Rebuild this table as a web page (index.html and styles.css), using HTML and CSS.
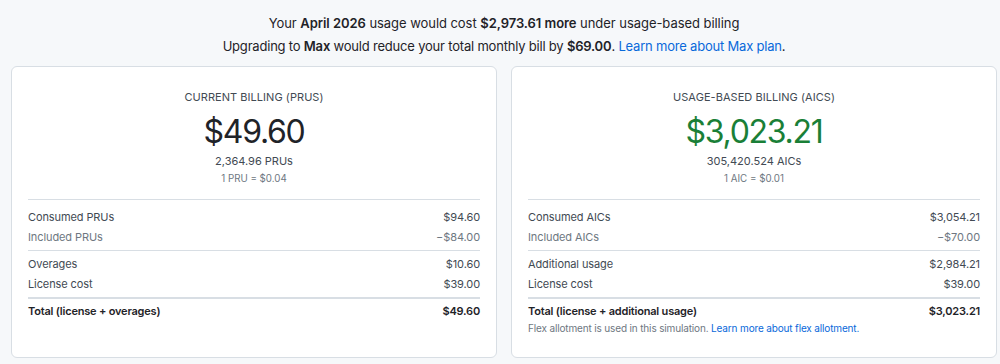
FILE: index.html
```html
<!DOCTYPE html>
<html lang="en">
<head>
<meta charset="utf-8">
<title>Billing comparison</title>
<link rel="stylesheet" href="styles.css">
</head>
<body>
<div class="page">
  <header class="summary">
    <p class="summary-line">Your <strong>April 2026</strong> usage would cost <strong>$2,973.61 more</strong> under usage-based billing</p>
    <p class="summary-line summary-line-tight">Upgrading to <strong>Max</strong> would reduce your total monthly bill by <strong>$69.00</strong>. <a class="link" href="#">Learn more about Max plan</a>.</p>
  </header>
  <div class="cards">
    <section class="card">
      <div class="card-head">
        <h2 class="card-title">Current billing (PRUs)</h2>
        <div class="amount">$49.60</div>
        <div class="units">2,364.96 PRUs</div>
        <div class="rate">1 PRU = $0.04</div>
      </div>
      <div class="breakdown">
        <div class="group group-first">
          <div class="row"><span>Consumed PRUs</span><span>$94.60</span></div>
          <div class="row row-muted"><span>Included PRUs</span><span>−$84.00</span></div>
        </div>
        <div class="group">
          <div class="row"><span>Overages</span><span>$10.60</span></div>
          <div class="row"><span>License cost</span><span>$39.00</span></div>
        </div>
        <div class="total">
          <div class="row row-total"><span>Total (license + overages)</span><span>$49.60</span></div>
        </div>
      </div>
    </section>
    <section class="card">
      <div class="card-head">
        <h2 class="card-title">Usage-based billing (AICs)</h2>
        <div class="amount amount-green">$3,023.21</div>
        <div class="units">305,420.524 AICs</div>
        <div class="rate">1 AIC = $0.01</div>
      </div>
      <div class="breakdown">
        <div class="group group-first">
          <div class="row"><span>Consumed AICs</span><span>$3,054.21</span></div>
          <div class="row row-muted"><span>Included AICs</span><span>−$70.00</span></div>
        </div>
        <div class="group">
          <div class="row"><span>Additional usage</span><span>$2,984.21</span></div>
          <div class="row"><span>License cost</span><span>$39.00</span></div>
        </div>
        <div class="total">
          <div class="row row-total"><span>Total (license + additional usage)</span><span>$3,023.21</span></div>
          <p class="note">Flex allotment is used in this simulation. <a class="link" href="#">Learn more about flex allotment.</a></p>
        </div>
      </div>
    </section>
  </div>
</div>
</body>
</html>
```
FILE: styles.css
```css
* { box-sizing: border-box; }
html, body { margin: 0; padding: 0; }
body {
  background: #f6f8fa;
  font-family: Inter, "Noto Sans", sans-serif;
  color: #1f2328;
}
.page {
  padding: 12px 3px 6px 11px;
}
.summary {
  text-align: center;
  margin-bottom: 8px;
}
.summary-line {
  margin: 0;
  font-size: 13px;
  line-height: 23px;
  letter-spacing: -0.05px;
  color: #1f2328;
}
.summary-line-tight { letter-spacing: -0.2px; }
.summary-line strong { font-weight: 600; }
.link { color: #0969da; text-decoration: none; }
.cards {
  display: grid;
  grid-template-columns: 1fr 1fr;
  gap: 14px;
}
.card {
  background: #ffffff;
  border: 1px solid #d8dee4;
  border-radius: 6px;
  padding: 22px 16px 0 16px;
  height: 292px;
}
.card-head {
  text-align: center;
  padding-bottom: 13px;
}
.card-title {
  margin: 0;
  font-size: 11px;
  line-height: 16px;
  font-weight: 400;
  text-transform: uppercase;
  letter-spacing: 0.05px;
  color: #424a53;
}
.amount {
  margin-top: 7px;
  font-size: 32px;
  line-height: 40px;
  font-weight: 400;
  letter-spacing: -1.3px;
  color: #1f2328;
}
.amount-green { color: #1a7f37; }
.units {
  font-size: 11px;
  line-height: 18px;
  color: #424a53;
}
.rate {
  margin-top: 2px;
  font-size: 9.75px;
  line-height: 14px;
  color: #6e7781;
}
.breakdown {
  border-top: 1px solid #d8dee4;
}
.group { padding: 3px 0 3px; }
.group-first { padding-top: 7px; }
.group + .group { border-top: 1px solid #d8dee4; }
.total {
  border-top: 2px solid #d8dee4;
  padding-top: 2px;
}
.row {
  display: flex;
  justify-content: space-between;
  font-size: 11px;
  line-height: 20px;
  letter-spacing: -0.1px;
  color: #424a53;
}
.row-muted { color: #6e7781; }
.row-total {
  font-weight: 600;
  letter-spacing: -0.2px;
  color: #1f2328;
}
.note {
  margin: 0;
  font-size: 10px;
  line-height: 14px;
  letter-spacing: -0.15px;
  color: #6e7781;
}
```
